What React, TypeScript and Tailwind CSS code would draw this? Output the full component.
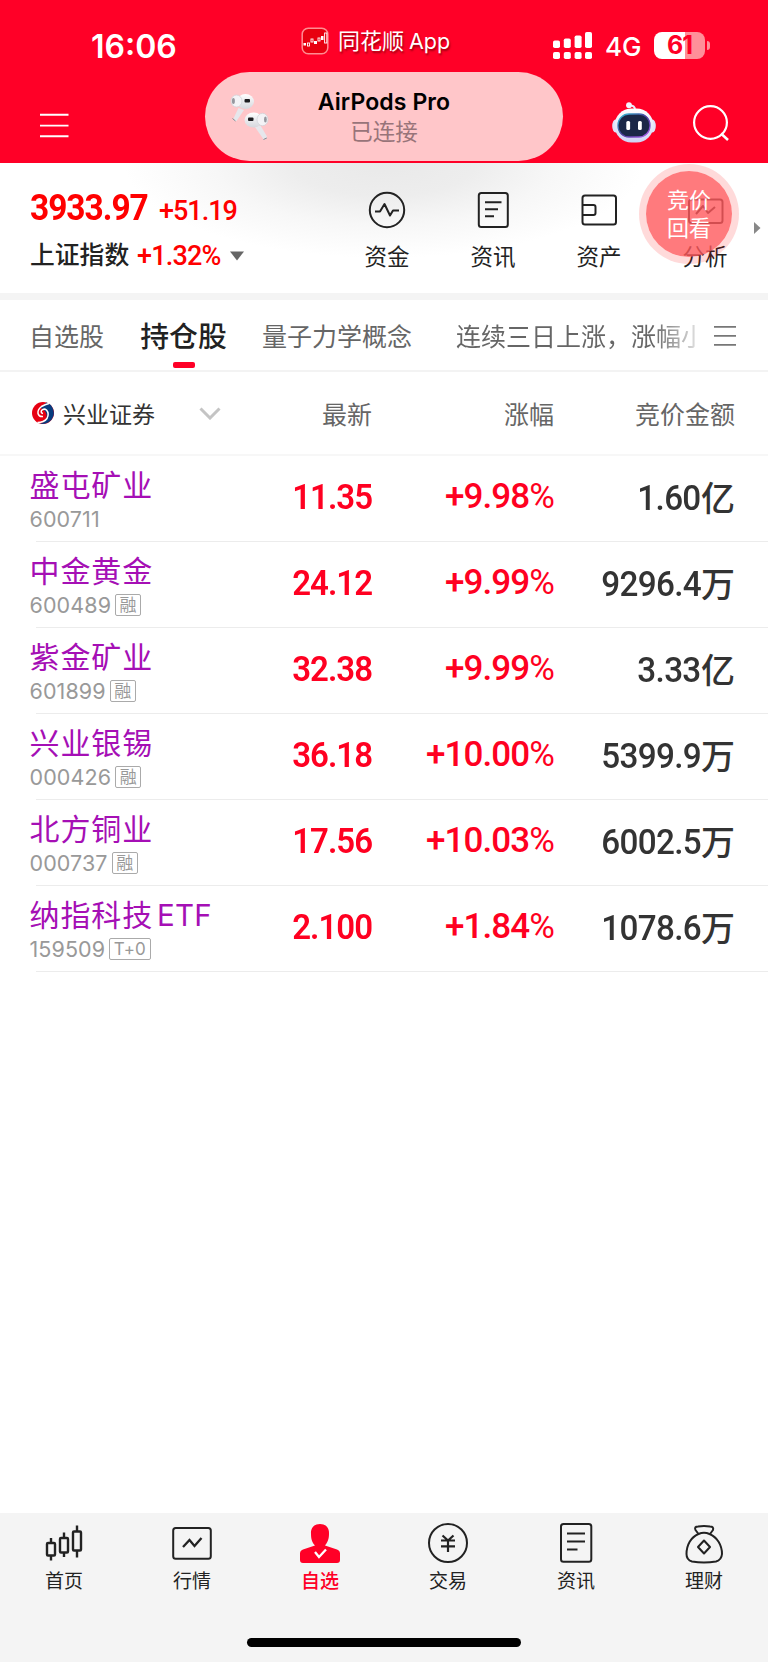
import type { ReactNode } from "react";

const NUM = "font-['Roboto','Noto_Sans_CJK_SC',sans-serif]";
const LATIN = "font-['Inter','Noto_Sans_CJK_SC',sans-serif]";

type Stock = {
  name: string;
  latin?: string;
  code: string;
  tag?: string;
  price: string;
  change: string;
  amount: string;
  unit: string;
};

const stocks: Stock[] = [
  { name: "盛屯矿业", code: "600711", price: "11.35", change: "+9.98", amount: "1.60", unit: "亿" },
  { name: "中金黄金", code: "600489", tag: "融", price: "24.12", change: "+9.99", amount: "9296.4", unit: "万" },
  { name: "紫金矿业", code: "601899", tag: "融", price: "32.38", change: "+9.99", amount: "3.33", unit: "亿" },
  { name: "兴业银锡", code: "000426", tag: "融", price: "36.18", change: "+10.00", amount: "5399.9", unit: "万" },
  { name: "北方铜业", code: "000737", tag: "融", price: "17.56", change: "+10.03", amount: "6002.5", unit: "万" },
  { name: "纳指科技", latin: "ETF", code: "159509", tag: "T+0", price: "2.100", change: "+1.84", amount: "1078.6", unit: "万" },
];

function Earbuds() {
  return (
    <svg width="40" height="48" viewBox="0 0 40 48" className="block">
      <defs>
        <linearGradient id="bud" x1="0" y1="0" x2="0" y2="1">
          <stop offset="0" stopColor="#ffffff" />
          <stop offset="1" stopColor="#d5d7dd" />
        </linearGradient>
      </defs>
      <path d="M8.500 15L14 17L6.500 28Q4.500 28.500 3 26.500Z" fill="#e6e7ec" />
      <path d="M2.500 25.500L5.500 28" stroke="#85878e" strokeWidth="1" />
      <ellipse cx="15.500" cy="8.500" rx="8.500" ry="7.600" fill="url(#bud)" />
      <ellipse cx="6.500" cy="8" rx="5.500" ry="6" fill="#f3f3f6" stroke="#cfd1d7" strokeWidth=".7" />
      <ellipse cx="3.400" cy="8" rx="1.500" ry="3" fill="#96989f" />
      <rect x="14.500" y="6" width="5.500" height="3.400" rx="1" fill="#1d1d20" />
      <path d="M25 34L30.500 32.500L37 43.500Q37 46 34 47Z" fill="#e6e7ec" />
      <path d="M33.500 46.500L36.800 45" stroke="#85878e" strokeWidth="1" />
      <ellipse cx="23.500" cy="27" rx="9" ry="7.600" fill="url(#bud)" />
      <ellipse cx="32.500" cy="26.500" rx="5.500" ry="6.200" fill="#f3f3f6" stroke="#cfd1d7" strokeWidth=".7" />
      <ellipse cx="35.400" cy="26.500" rx="1.400" ry="3" fill="#96989f" />
      <rect x="18" y="24.500" width="5.500" height="3.400" rx="1" fill="#1d1d20" />
    </svg>
  );
}

function Robot() {
  return (
    <svg width="44" height="41" viewBox="0 0 44 41" className="block">
      <defs>
        <linearGradient id="shell" x1="0" y1="0" x2="0" y2="1">
          <stop offset="0" stopColor="#ffffff" />
          <stop offset="1" stopColor="#cfd3f5" />
        </linearGradient>
        <linearGradient id="rim" x1="0" y1="0" x2="1" y2="1">
          <stop offset="0" stopColor="#35c8d8" />
          <stop offset=".5" stopColor="#4a3a9a" />
          <stop offset="1" stopColor="#b060f0" />
        </linearGradient>
      </defs>
      <path d="M17 3.500Q23 3 23 8" stroke="#e8eafc" strokeWidth="2" fill="none" />
      <circle cx="17" cy="3.200" r="2.900" fill="#f4f4ff" />
      <ellipse cx="3.500" cy="24" rx="3.300" ry="6.500" fill="#dfe2fa" />
      <ellipse cx="40.500" cy="24" rx="3.300" ry="6.500" fill="#dfe2fa" />
      <rect x="2.500" y="6.500" width="39" height="34" rx="17" fill="url(#shell)" />
      <rect x="6" y="12" width="32" height="23" rx="11" fill="#1b2747" stroke="url(#rim)" strokeWidth="1.300" />
      <rect x="14.300" y="19" width="3.800" height="9" rx="1.500" fill="#fff" />
      <rect x="26" y="19" width="3.800" height="9" rx="1.500" fill="#fff" />
    </svg>
  );
}

function AppBadge() {
  return (
    <svg width="28" height="28" viewBox="0 0 28 28" className="block">
      <rect x="1.200" y="1.200" width="25.600" height="25.600" rx="6" fill="#e80010" stroke="#ff8c92" strokeWidth="1.500" />
      <rect x="2.500" y="16" width="2.500" height="2.500" fill="#fff" />
      <rect x="6.500" y="16" width="2" height="3" fill="none" stroke="#fff" strokeWidth=".9" />
      <rect x="10" y="12" width="2" height="3" fill="none" stroke="#fff" strokeWidth=".9" />
      <rect x="13" y="14" width="3" height="3" fill="#fff" />
      <rect x="17" y="11" width="2" height="3" fill="none" stroke="#fff" strokeWidth=".9" />
      <rect x="20" y="9" width="2.500" height="4" fill="#fff" />
      <rect x="23.600" y="6" width="2.200" height="10" fill="none" stroke="#fff" strokeWidth=".9" />
    </svg>
  );
}

function Signal() {
  return (
    <svg width="40" height="28" viewBox="0 0 40 28" className="block" fill="#fff">
      <rect x="0" y="8.500" width="7" height="7.500" rx="1.800" />
      <rect x="10.800" y="6.500" width="7" height="9.500" rx="1.800" />
      <rect x="21.600" y="3.500" width="7" height="12.500" rx="1.800" />
      <rect x="32" y="0" width="7" height="16" rx="1.800" />
      <rect x="0" y="20" width="7" height="7" rx="1.800" />
      <rect x="10.800" y="20" width="7" height="7" rx="1.800" />
      <rect x="21.600" y="20" width="7" height="7" rx="1.800" />
      <rect x="32" y="20" width="7" height="7" rx="1.800" />
    </svg>
  );
}

function Header() {
  return (
    <header className="relative h-[163px] bg-[#ff0027] text-white">
      <div className={`flex h-[72px] ${LATIN}`}>
        <div className="ml-[91px] mt-[27px] w-[210px] text-[32px] font-semibold leading-[40px]">16:06</div>
        <div className="mt-[27px] flex h-[28px] w-[252px] items-center">
          <AppBadge />
          <span className="ml-[9px] whitespace-nowrap text-[22px] leading-[28px] [text-shadow:1px_2px_2px_rgba(90,0,0,0.6)]">同花顺<span className="ml-[5px] text-[21.5px]">App</span></span>
        </div>
        <div className="mt-[32px] flex h-[28px]">
          <Signal />
          <span className="ml-[12px] mt-[1px] w-[49px] text-[26px] font-medium leading-[28px]">4G</span>
          <div className="flex h-[27px] w-[51px] items-center justify-center rounded-[8px] bg-[linear-gradient(90deg,#fff_61%,#ff8f99_61%)] text-[25px] font-bold leading-[27px] tracking-[-1px] text-[#ff0027]">61</div>
          <div className="ml-[2px] mt-[9px] h-[9px] w-[3px] rounded-r-full bg-[#ff8f99]" />
        </div>
      </div>
      <div className="flex pt-[30px]">
        <svg width="30" height="40" viewBox="0 0 30 40" className="ml-[39px] mt-[4px] block">
          <path d="M1 8.700H29.500M1 19.600H29.500M1 30.300H29.500" stroke="#fff" strokeWidth="1.900" />
        </svg>
        <div className="ml-[543px]"><Robot /></div>
        <svg width="38" height="38" viewBox="0 0 38 38" className="ml-[36px] mt-[2px] block">
          <circle cx="18.500" cy="18.500" r="16.400" fill="none" stroke="#fff" strokeWidth="2.200" />
          <path d="M29 29.500L36 36" stroke="#fff" strokeWidth="2.500" />
        </svg>
      </div>
      <div className={`absolute left-[205px] top-[72px] flex h-[89px] w-[358px] rounded-full bg-[#ffc6c9] ${LATIN}`}>
        <div className="ml-[25px] mt-[21px] w-[40px]"><Earbuds /></div>
        <div className="ml-[14px] mt-[15px] w-[200px] text-center">
          <div className="text-[23px] font-semibold leading-[30px] tracking-[0.1px] text-black">AirPods Pro</div>
          <div className="pt-px text-[22.500px] leading-[28px] text-[#987479]">已连接</div>
        </div>
      </div>
    </header>
  );
}

function Shortcut({ label, children }: { label: string; children: ReactNode }) {
  return (
    <div className="flex w-[106px] flex-col items-center">
      <svg width="40" height="40" viewBox="0 0 40 40" className="block" fill="none" stroke="#222" strokeWidth="2" strokeLinejoin="round">
        {children}
      </svg>
      <span className="mt-[9px] text-[22.500px] leading-[32px] text-[#222]">{label}</span>
    </div>
  );
}

function IndexPanel() {
  return (
    <section className="relative flex h-[130px] bg-[radial-gradient(ellipse_260px_95px_at_384px_0,#e9e9e9_0%,#ededed_35%,#f7f7f7_65%,#fff_100%)]">
      <div className={`w-[304px] pl-[30px] ${NUM}`}>
        <div className="mt-[25px] flex items-baseline text-[#ff0000]">
          <span className="w-[129px] origin-left scale-x-[0.93] text-[36px] font-bold leading-[40px] tracking-[-1.1px]">3933.97</span>
          <span className="text-[27px] font-medium leading-[40px] tracking-[-1px]">+51.19</span>
        </div>
        <div className="mt-[5px] flex h-[40px] items-center">
          <span className="w-[107px] text-[24.800px] font-medium leading-[40px] text-[#222]">上证指数</span>
          <span className="w-[93px] text-[27px] font-medium leading-[40px] tracking-[-0.8px] text-[#ff0000]">+1.32%</span>
          <svg width="14" height="10" viewBox="0 0 14 10"><path d="M0 .5H14L7 9.500Z" fill="#666" /></svg>
        </div>
      </div>
      <div className="mt-[27px] flex w-[454px] shrink-0 pl-[30px]">
        <Shortcut label="资金">
          <circle cx="20" cy="20" r="17.200" />
          <path d="M8 21.500H13L17.500 14L23 25.500L26 20.500H32" />
        </Shortcut>
        <Shortcut label="资讯">
          <rect x="5.800" y="3" width="29" height="34" rx="2.500" />
          <path d="M12 12.200H28.500M12 19.200H25M12 26.200H21" />
        </Shortcut>
        <Shortcut label="资产">
          <rect x="3.500" y="5.500" width="33.500" height="29" rx="2.500" />
          <path d="M4 15H14.500Q16.500 15 16.500 17V23Q16.500 25 14.500 25H4" />
        </Shortcut>
        <Shortcut label="分析">
          <rect x="4" y="9.500" width="33.500" height="23.500" rx="2.500" />
          <path d="M11 24L18 16L23 23L30 17" />
        </Shortcut>
      </div>
      <svg width="7" height="12" viewBox="0 0 7 12" className="absolute left-[754px] top-[59px]"><path d="M0 0L6.500 6L0 12Z" fill="#888" /></svg>
      <div className="absolute left-[639px] top-px flex h-[100px] w-[100px] flex-col items-center justify-center rounded-full border-[7px] border-[#ff0a0a]/15 bg-[#ff595c]/80 bg-clip-padding pb-[4px] text-[22px] leading-[28px] text-white">
        <span>竞价</span>
        <span>回看</span>
      </div>
    </section>
  );
}

function Tabs() {
  return (
    <nav className="flex h-[72px] border-b-2 border-[#f3f3f3] pl-[29px] text-[25px] leading-[71px] text-[#666]">
      <span className="w-[111px]">自选股</span>
      <div className="flex w-[87px] flex-col items-center">
        <span className="h-[62px] whitespace-nowrap text-[28.800px] font-medium leading-[70px] text-[#222]">持仓股</span>
        <span className="h-[6px] w-[22px] rounded-[2px] bg-[#ff0027]" />
      </div>
      <span className="ml-[35px] w-[194px] whitespace-nowrap">量子力学概念</span>
      <div className="w-[240px] overflow-hidden whitespace-nowrap [mask-image:linear-gradient(90deg,#000_82%,transparent_105%)]">连续三日上涨，涨幅小</div>
      <svg width="24" height="22" viewBox="0 0 24 22" className="ml-[17px] mt-[25px]"><path d="M1 1.800H23M1 10.800H23M1 19.800H23" stroke="#777" strokeWidth="1.800" /></svg>
    </nav>
  );
}

function TableHead() {
  return (
    <div className="flex h-[84px] items-center border-b-2 border-[#f7f7f7] text-[25px] leading-[40px] text-[#666]">
      <div className="flex w-[232px] items-center pl-[32px]">
        <svg width="22" height="22" viewBox="0 0 22 22">
          <circle cx="11" cy="11" r="11" fill="#e60012" />
          <path d="M14.500 .6A11 11 0 0 1 8 21.600C13 20 15 17 14.500 13C14 8 8 6 8.500 5C9.500 3.500 12 3 14.500 .6Z" fill="#073b7e" />
          <path d="M17 1.500Q13 2.500 9.500 4.500Q5.500 7.500 6 11.500Q7 15 11 14.500" fill="none" stroke="#fff" strokeWidth="1.500" />
          <path d="M5.500 20.500Q12 20.500 15 16.500Q17.500 11.500 14.500 8Q12 6 9.500 8.500Q8.500 11 11 11.500" fill="none" stroke="#fff" strokeWidth="1.500" />
        </svg>
        <span className="ml-[9px] w-[136px] text-[23px] leading-[38px] text-[#333]">兴业证券</span>
        <svg width="22" height="13" viewBox="0 0 22 13" className="shrink-0"><path d="M1.500 1.500L11 11L20.500 1.500" fill="none" stroke="#c4c4c4" strokeWidth="3" /></svg>
      </div>
      <span className="w-[140px] text-right">最新</span>
      <span className="w-[182px] text-right">涨幅</span>
      <span className="w-[181px] text-right">竞价金额</span>
    </div>
  );
}

function StockRow({ stock }: { stock: Stock }) {
  return (
    <div className={`flex h-[86px] ${NUM}`}>
      <div className="w-[232px] pl-[29.500px] pt-[7px]">
        <div className="h-[43px] whitespace-nowrap font-['Noto_Sans_CJK_SC',sans-serif] text-[30px] leading-[40px] tracking-[0.9px] text-[#a50fb5]">
          {stock.name}
          {stock.latin && <span className={`ml-[4px] text-[29.500px] tracking-[0.2px] ${LATIN}`}>{stock.latin}</span>}
        </div>
        <div className={`flex h-[26px] items-center text-[21.500px] leading-[26px] text-[#999] ${LATIN}`}>
          <span className="tracking-[0.1px]">{stock.code}</span>
          {stock.tag && (
            <span className="ml-[4px] flex h-[22px] items-center rounded-[2px] border-[1.5px] border-[#aaa] px-[3.500px] text-[17px] leading-[18px] tracking-[0.2px]">{stock.tag}</span>
          )}
        </div>
      </div>
      <div className="w-[140px] origin-right scale-x-[0.93] pt-[21px] text-right text-[35.500px] font-semibold leading-[40px] tracking-[-1.1px] text-[#ff0021]">{stock.price}</div>
      <div className="w-[182px] pt-[21px] text-right text-[35px] font-medium leading-[40px] tracking-[-0.9px] text-[#ff0021]">
        {stock.change}<span className="font-normal">%</span>
      </div>
      <div className="flex w-[181px] justify-end pt-[23px] text-[35px] font-medium leading-[40px] text-[#333]">
        <span className="origin-right scale-x-[0.95] tracking-[-0.7px]">{stock.amount}</span>
        <span className="text-[34px]">{stock.unit}</span>
      </div>
    </div>
  );
}

function NavItem({ label, active, children }: { label: string; active?: boolean; children: ReactNode }) {
  return (
    <div className="flex w-[128px] flex-col items-center pt-[9px]">
      <svg width="42" height="42" viewBox="0 0 42 42" className="block" fill="none" stroke="#222" strokeWidth="2" strokeLinejoin="round">
        {children}
      </svg>
      <span className={active ? "mt-[2px] text-[19px] font-medium leading-[28px] text-[#ff0027]" : "mt-[2px] text-[19px] leading-[28px] text-[#222]"}>{label}</span>
    </div>
  );
}

function BottomNav() {
  return (
    <footer className="mt-auto flex h-[149px] flex-col items-center bg-[#f4f4f4]">
      <div className="flex h-[125px] w-full">
        <NavItem label="首页">
          <g strokeWidth="2.400">
            <path d="M8 16V21M8 34V38.500M21 10.500V16M21 31V35M34 3.500V9M34 29V35.500" />
            <rect x="4" y="21" width="8" height="12.500" rx="1" />
            <rect x="17" y="16" width="8" height="14.500" rx="1" />
            <rect x="30" y="9.500" width="8" height="19" rx="1" />
          </g>
        </NavItem>
        <NavItem label="行情">
          <rect x="2.200" y="6" width="37.600" height="30.800" rx="2.500" />
          <path d="M12 25L18.500 18L23.500 24L30.500 16" strokeLinejoin="miter" strokeWidth="2.300" />
        </NavItem>
        <NavItem label="自选" active>
          <path d="M21 2C27 2 30.500 6 30 12C30 18 28 21 26 23.500L38 27.500Q41 28.500 41 31.500V38Q41 41 38 41H4Q1 41 1 38V31.500Q1 28.500 4 27.500L16 23.500C13.500 21 12 18 12 12C11.500 6 15 2 21 2Z" fill="#ff0027" stroke="none" />
          <path d="M16 30L20 35L27 27.500" stroke="#fff" strokeWidth="2.300" strokeLinejoin="miter" />
        </NavItem>
        <NavItem label="交易">
          <circle cx="21" cy="21" r="19" />
          <path d="M15.500 13.500L21 18.500L26.500 13.500M21 18.500V30M14 18.500H28M14 24.300H28" strokeWidth="2.200" />
        </NavItem>
        <NavItem label="资讯">
          <rect x="6" y="2" width="30.300" height="37.800" rx="2.500" />
          <path d="M12 11.600H30M12 19.500H30M12 27.400H22.500" />
        </NavItem>
        <NavItem label="理财">
          <path d="M15.500 12L12.500 8Q11 4.500 15 4.500Q21 3.500 27 4.500Q31 4.500 30 8L27 12" />
          <path d="M15.500 12Q21 9.500 26.500 12C34 15 39 23 39 32Q38.500 38 33 39.500Q21 41.500 9 39.500Q3.500 38 3.500 32C3.500 23 8 15 15.500 12Z" />
          <path d="M21 18.500L27 25L21 31.500L15 25Z" />
        </NavItem>
      </div>
      <div className="h-[9px] w-[274px] rounded-full bg-black" />
    </footer>
  );
}

export default function App() {
  return (
    <div className="flex h-[1662px] w-[768px] flex-col overflow-hidden bg-white font-['Noto_Sans_CJK_SC',sans-serif]">
      <Header />
      <IndexPanel />
      <div className="h-[7px] bg-[#f4f4f4]" />
      <Tabs />
      <TableHead />
      <main>
        {stocks.map((stock) => (
          <div key={stock.code}>
            <StockRow stock={stock} />
            <div className="ml-[36px] -mt-px h-px bg-[#ececec]" />
          </div>
        ))}
      </main>
      <BottomNav />
    </div>
  );
}
